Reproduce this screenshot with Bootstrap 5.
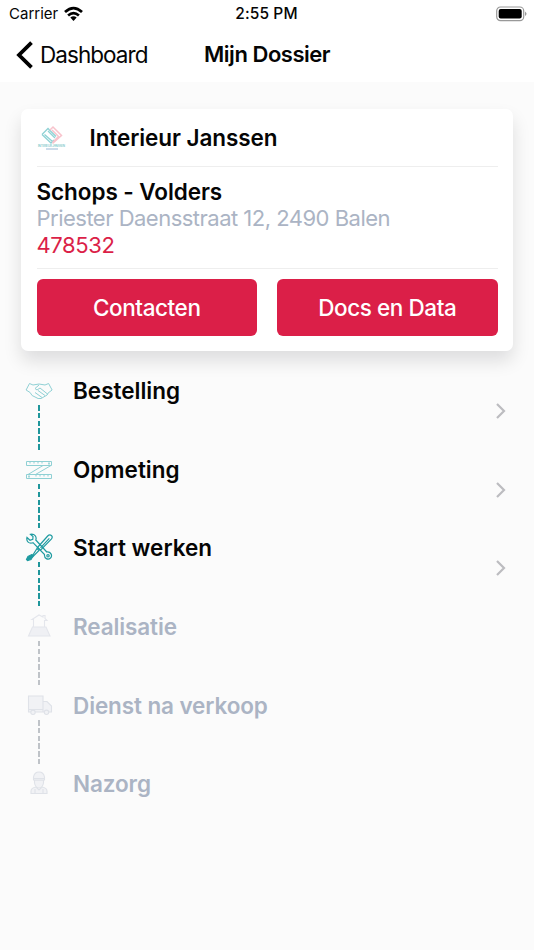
<!DOCTYPE html>
<html lang="nl">
<head>
<meta charset="utf-8">
<meta name="viewport" content="width=device-width, initial-scale=1">
<title>Mijn Dossier</title>
<link href="https://cdn.jsdelivr.net/npm/bootstrap@5.3.0/dist/css/bootstrap.min.css" rel="stylesheet">
<style>
body{font-family:Inter,"Liberation Sans",sans-serif;background:#fbfbfb;color:#050505;min-height:950px;overflow:hidden}
.app-header{height:82px}
.status-bar{height:27px;font-size:15px;padding:0 7px 0 9px;line-height:27px}
.status-bar>*{flex:1 1 0}
.carrier{letter-spacing:0}
.carrier svg{margin-left:5px}
.clock{font-weight:500;font-size:15.5px;letter-spacing:.1px;padding-right:3px}
.title-bar{height:55px;font-size:22.5px;padding-left:16px}
.back-link{width:188px;color:#050505;letter-spacing:-.95px}
.back-link svg{margin-right:7px}
.page-title{font-weight:600;font-size:22px;letter-spacing:-.47px;line-height:1;padding-bottom:2px}
.dossier{margin:27px 21px 0;padding:0 15.5px 15.5px;height:242px;border-radius:7px;box-shadow:0 10px 18px rgba(0,0,20,.12)}
.firm-row{height:58px;border-bottom:1px solid #eee}
.firm-name{margin-left:23px;font-size:22.5px;font-weight:600;letter-spacing:-.08px}
.client-block{height:102px;padding-top:10.500px;border-bottom:1px solid #eee;font-size:22px;line-height:26.5px}
.client-name{font-size:22.5px;font-weight:600;line-height:27.500px;letter-spacing:-.07px}
.muted-text{color:#abb4c4;letter-spacing:-.51px}
.crimson{color:#db1f48;letter-spacing:-.4px}
.button-row{padding-top:10px}
.btn-crimson{height:57px;border-radius:6px;background:#db1f48;color:#fff;font-size:22.5px;font-weight:500;letter-spacing:-.42px}
.btn-crimson:hover{background:#c41b40;color:#fff}
.steps{padding:24px 27px 0 25px}
.step{height:78.7px}
.step-rail{width:28px}
.step-rail svg{display:block;width:28px;height:30px}
.dash{width:2px;height:45px;background:repeating-linear-gradient(#1f969b 0 5.5px,transparent 5.5px 7.8px)}
.dash-off{background:repeating-linear-gradient(#bfc3c8 0 5.5px,transparent 5.5px 7.8px)}
.step-name{font-size:22.5px;font-weight:600;line-height:32px;margin-left:20px}
.step-off{color:#abb4c4;letter-spacing:-.11px}
.step-arrow{margin-top:27px}
</style>
</head>
<body>
<header class="app-header bg-white">
  <div class="status-bar d-flex align-items-center">
    <div class="d-flex align-items-center carrier">Carrier
      <svg width="21" height="16" viewBox="0 0 21 16" fill="none" stroke="#000" stroke-width="2.7"><path d="M2 6.1Q10.5-1.8 19 6.1M5.1 9.4q5.4-4.7 10.8 0"/><path d="M7.3 11.6q3.2-2.5 6.4 0L10.5 15z" fill="#000" stroke="none"/></svg>
    </div>
    <div class="text-center clock">2:55 PM</div>
    <div class="d-flex justify-content-end"><svg width="31" height="16" viewBox="0 0 31 16"><rect x=".7" y="1" width="27" height="13.6" rx="3.8" fill="#fff" stroke="#999" stroke-width="1.2"/><rect x="2.7" y="3" width="23" height="9.6" rx="2" fill="#000"/><path d="M29 5.5q3 2.3 0 4.6z" fill="#999"/></svg></div>
  </div>
  <nav class="title-bar d-flex align-items-center">
    <a href="#" class="back-link d-flex align-items-center text-decoration-none"><svg width="17" height="28" viewBox="0 0 17 28" fill="none" stroke="#000" stroke-width="3.8"><path d="M15.500 1.700 3 14l12.500 12.300"/></svg>Dashboard</a>
    <h1 class="page-title mb-0">Mijn Dossier</h1>
  </nav>
</header>
<main>
  <section class="dossier bg-white">
    <div class="firm-row d-flex align-items-center">
      <svg width="30" height="26" viewBox="0 0 30 26" fill="none"><path d="m5 9.500 6-6 8 8M5 9.500l9 8.500 3-3M7.500 9.500l8 7M11 6l7 7" stroke="#8fd2d5" stroke-width="1.300"/><path d="m13 5 3-3 8.500 8.500-9 8M15 5l6.500 6.500-6 6" stroke="#f8c3cc" stroke-width="1.500"/><text x="1" y="21.800" font-size="3" font-weight="500" textLength="27" fill="#6fbfc4">INTERIEUR JANSSEN</text><path d="M9 24h12" stroke="#8fb0d0" stroke-width=".9"/></svg>
      <span class="firm-name">Interieur Janssen</span>
    </div>
    <div class="client-block">
      <div class="client-name">Schops - Volders</div>
      <div class="muted-text">Priester Daensstraat 12, 2490 Balen</div>
      <div class="crimson">478532</div>
    </div>
    <div class="row g-0 button-row">
      <div class="col pe-2 me-1"><button class="btn btn-crimson w-100 border-0">Contacten</button></div>
      <div class="col ps-2"><button class="btn btn-crimson w-100 border-0">Docs en Data</button></div>
    </div>
  </section>
  <section class="steps">
    <div class="step d-flex">
      <div class="step-rail d-flex flex-column align-items-center"><svg viewBox="0 0 28 30" fill="none" stroke="#8fd0d4" stroke-width="1"><path d="m4.500 8.500-3.400 6.500 4 2.500 2 3 6 3h3l6-3.500 1-2 4-3-3.500-6.500-3.600 1.500-6-1-6 1zM14 10l-4 3.500 2 1.500 3-2 7.500 6M10 17.500l7 5M13 15.500l7 5"/></svg><div class="dash"></div></div>
      <div class="step-name flex-grow-1">Bestelling</div><svg class="step-arrow" width="12" height="18" viewBox="0 0 12 18" fill="none" stroke="#bcbcc0" stroke-width="2.2"><path d="m2 2 7 7-7 7"/></svg>
    </div>
    <div class="step d-flex">
      <div class="step-rail d-flex flex-column align-items-center"><svg viewBox="0 0 28 30" fill="none" stroke="#8fd0d4" stroke-width="1"><path d="M1.500 7.500h25v4h-25zM1.500 20.500h25v4h-25zM18 11.500 3 20.500m23-9L10.500 20.500M5 8v1.500m4-1.500v1.500m4-1.500v1.500m4-1.500v1.500M11 21v1.500m4-1.500v1.500m4-1.500v1.500m4-1.500v1.500"/><path d="M24 8.500v2M4 21.500v2" stroke="#4db5ba"/></svg><div class="dash"></div></div>
      <div class="step-name flex-grow-1">Opmeting</div><svg class="step-arrow" width="12" height="18" viewBox="0 0 12 18" fill="none" stroke="#bcbcc0" stroke-width="2.2"><path d="m2 2 7 7-7 7"/></svg>
    </div>
    <div class="step d-flex">
      <div class="step-rail d-flex flex-column align-items-center"><svg viewBox="0 0 28 30" fill="none" stroke="#1f9ba1" stroke-width="1.200"><path d="m2 5.500 3 2.800 2.800-1L8 4.500 5.500 2.300C9.500 1.500 12 4.500 10.800 8l11 12c4-.5 6 3.500 3.700 6-2.500 2.300-6.500.5-6-3.500L8 10.700C4 12 1 9.500 2 5.500z"/><circle cx="23" cy="23.800" r="1.200"/><path d="m12.500 15.500 10.200-11.500c2.500-2.800 6 .3 3.600 3.100L15.500 18.200zM15.500 15.800l8.800-9.500"/><path d="m12 16.500 2 2-6.500 6.500-1.500 1z"/><path d="m7 22.500 1 1.500-2 3.500-3.500 1-1-1 1.500-3z" fill="#1f9ba1"/></svg><div class="dash"></div></div>
      <div class="step-name flex-grow-1">Start werken</div><svg class="step-arrow" width="12" height="18" viewBox="0 0 12 18" fill="none" stroke="#bcbcc0" stroke-width="2.2"><path d="m2 2 7 7-7 7"/></svg>
    </div>
    <div class="step d-flex">
      <div class="step-rail d-flex flex-column align-items-center"><svg viewBox="0 0 28 30" fill="none" stroke="#e4e6ec" stroke-width="1.100"><path d="M8.500 16V8.500H7L14 4l4 2V4.500h2v3l2 2h-2.500V16"/><path d="M7.500 16h13.500l4 9H3.500z" fill="#eff0f4"/></svg><div class="dash dash-off"></div></div>
      <div class="step-name step-off">Realisatie</div>
    </div>
    <div class="step d-flex">
      <div class="step-rail d-flex flex-column align-items-center"><svg viewBox="0 0 28 30" fill="#f1f2f5" stroke="#dfe2e8" stroke-width="1.100"><path d="M3.500 6h14.500v13.500H3.500zM18 11.500h4l4.500 4.500v6H18zM3.500 19.500H18V22H3.500z"/><circle cx="8" cy="22.300" r="2.200"/><circle cx="21.500" cy="22.300" r="2.200"/></svg><div class="dash dash-off"></div></div>
      <div class="step-name step-off">Dienst na verkoop</div>
    </div>
    <div class="step d-flex">
      <div class="step-rail d-flex flex-column align-items-center"><svg viewBox="0 0 28 30" fill="#f1f2f5" stroke="#dfe2e8" stroke-width="1.100"><path d="M9.500 12v3q1 5 4.500 5t4.500-5v-3z"/><path d="M8.500 12V9q1-5 5.500-5t5.500 5v3z"/><path d="M11 19q-5 1-5 4v2.500h16V23q0-3-5-4l-3 3z"/><path d="M8.500 10.500h11M10 21v4M18 21v4"/></svg></div>
      <div class="step-name step-off">Nazorg</div>
    </div>
  </section>
</main>
<script src="https://cdn.jsdelivr.net/npm/bootstrap@5.3.0/dist/js/bootstrap.bundle.min.js"></script>
</body>
</html>
